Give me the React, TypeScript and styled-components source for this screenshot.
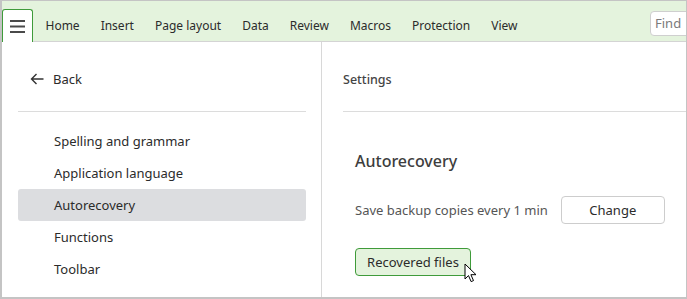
import styled, { createGlobalStyle } from 'styled-components';

const GlobalStyle = createGlobalStyle`
  html, body {
    margin: 0;
    padding: 0;
    background: #fff;
  }
  body {
    font-family: "Noto Sans", "Open Sans", sans-serif;
    color: #333;
  }
`;

const Window = styled.div`
  position: relative;
  box-sizing: border-box;
  width: 687px;
  height: 299px;
  border: 1px solid #c4c4c4;
  border-left-width: 2px;
  border-bottom-width: 2px;
  display: flex;
  flex-direction: column;
  overflow: hidden;
`;

const Ribbon = styled.div`
  display: flex;
  align-items: flex-end;
  height: 40px;
  flex: none;
  background: #e4f3dd;
  border-bottom: 1px solid #d4d4d4;
`;

const MenuButton = styled.div`
  box-sizing: border-box;
  width: 31px;
  height: 33px;
  margin-bottom: -1px;
  background: #fff;
  border: 1px solid #3f9b3a;
  border-bottom: none;
  border-radius: 3px 3px 0 0;
  display: flex;
  align-items: center;
  justify-content: center;
  position: relative;
  z-index: 1;
`;

const Tabs = styled.nav`
  display: flex;
  align-self: stretch;
  align-items: center;
  padding: 8px 0 0 2px;
  flex: 1;
`;

const Tab = styled.span`
  font-size: 12px;
  color: #2b2b2b;
  padding: 0 10.5px;
  white-space: nowrap;
`;

const Find = styled.div`
  box-sizing: border-box;
  align-self: center;
  margin-top: 4px;
  width: 50px;
  height: 25px;
  margin-right: -14px;
  border: 1px solid #cfcfcf;
  border-radius: 4px;
  background: #fff;
  font-size: 13px;
  color: #7a7a7a;
  padding: 2px 0 0 4px;
`;

const Body = styled.div`
  flex: 1;
  display: grid;
  grid-template-columns: 320px 1fr;
  min-height: 0;
`;

const Sidebar = styled.aside`
  border-right: 1px solid #d8d8d8;
  padding: 0 15px 0 16px;
`;

const BackRow = styled.div`
  box-sizing: border-box;
  display: flex;
  align-items: center;
  height: 70px;
  padding: 5px 0 0 12px;
  gap: 9px;
  font-size: 13px;
  color: #2b2b2b;
  border-bottom: 1px solid #dcdcdc;
`;

const NavList = styled.ul`
  list-style: none;
  margin: 13px 0 0;
  padding: 0;
`;

const NavItem = styled.li<{ $active?: boolean }>`
  height: 32px;
  display: flex;
  align-items: center;
  padding-left: 36px;
  font-size: 13px;
  color: #2b2b2b;
  border-radius: 3px;
  background: ${(p) => (p.$active ? '#dcdde0' : 'transparent')};
`;

const Main = styled.section`
  padding-left: 21px;
`;

const MainHead = styled.div`
  box-sizing: border-box;
  height: 70px;
  display: flex;
  align-items: center;
  padding-top: 5px;
  font-size: 12.5px;
  font-weight: 500;
  color: #444;
  border-bottom: 1px solid #dcdcdc;
`;

const Section = styled.div`
  padding: 38px 0 0 12px;
`;

const Heading = styled.h2`
  margin: 0;
  font-size: 16px;
  font-weight: 500;
  color: #3d3d3d;
  line-height: 22px;
`;

const Row = styled.div`
  display: flex;
  align-items: center;
  gap: 13px;
  margin-top: 24px;
  font-size: 13px;
  color: #555;
`;

const Button = styled.button<{ $primary?: boolean }>`
  box-sizing: border-box;
  font-family: inherit;
  font-size: 13px;
  color: #2b2b2b;
  height: 28px;
  width: ${(p) => (p.$primary ? '116px' : '104px')};
  border-radius: 4px;
  border: 1px solid ${(p) => (p.$primary ? '#3f9b3a' : '#cdcdcd')};
  background: ${(p) => (p.$primary ? '#e4f3dd' : '#fff')};
  padding: 0;
  cursor: default;
`;

const ButtonWrap = styled.div`
  position: relative;
  display: inline-block;
  margin-top: 24px;
`;

const Cursor = styled.svg`
  position: absolute;
  left: 109px;
  top: 15px;
`;

const items = ['Spelling and grammar', 'Application language', 'Autorecovery', 'Functions', 'Toolbar'];
const tabs = ['Home', 'Insert', 'Page layout', 'Data', 'Review', 'Macros', 'Protection', 'View'];

const App = () => {
  return (
    <>
      <GlobalStyle />
      <Window>
        <Ribbon>
          <MenuButton>
            <svg width="15" height="13" viewBox="0 0 15 13">
              <path d="M0 1h15M0 6.5h15M0 12h15" stroke="#4a4a4a" strokeWidth="2" />
            </svg>
          </MenuButton>
          <Tabs>
            {tabs.map((t) => (
              <Tab key={t}>{t}</Tab>
            ))}
          </Tabs>
          <Find>Find</Find>
        </Ribbon>
        <Body>
          <Sidebar>
            <BackRow>
              <svg width="14" height="12" viewBox="0 0 14 12">
                <path d="M13.5 6H1.5M6.5 1L1.5 6l5 5" stroke="#333" strokeWidth="1.4" fill="none" />
              </svg>
              Back
            </BackRow>
            <NavList>
              {items.map((i) => (
                <NavItem key={i} $active={i === 'Autorecovery'}>
                  {i}
                </NavItem>
              ))}
            </NavList>
          </Sidebar>
          <Main>
            <MainHead>Settings</MainHead>
            <Section>
              <Heading>Autorecovery</Heading>
              <Row>
                Save backup copies every 1 min
                <Button>Change</Button>
              </Row>
              <ButtonWrap>
                <Button $primary>Recovered files</Button>
                <Cursor width="13" height="20" viewBox="0 0 13 20">
                  <path
                    d="M1 1v15l3.5-3.4 2.6 6 2.4-1-2.6-5.9H12L1 1z"
                    fill="#fff"
                    stroke="#000"
                    strokeWidth="1"
                    strokeLinejoin="round"
                  />
                </Cursor>
              </ButtonWrap>
            </Section>
          </Main>
        </Body>
      </Window>
    </>
  );
};

export default App;
